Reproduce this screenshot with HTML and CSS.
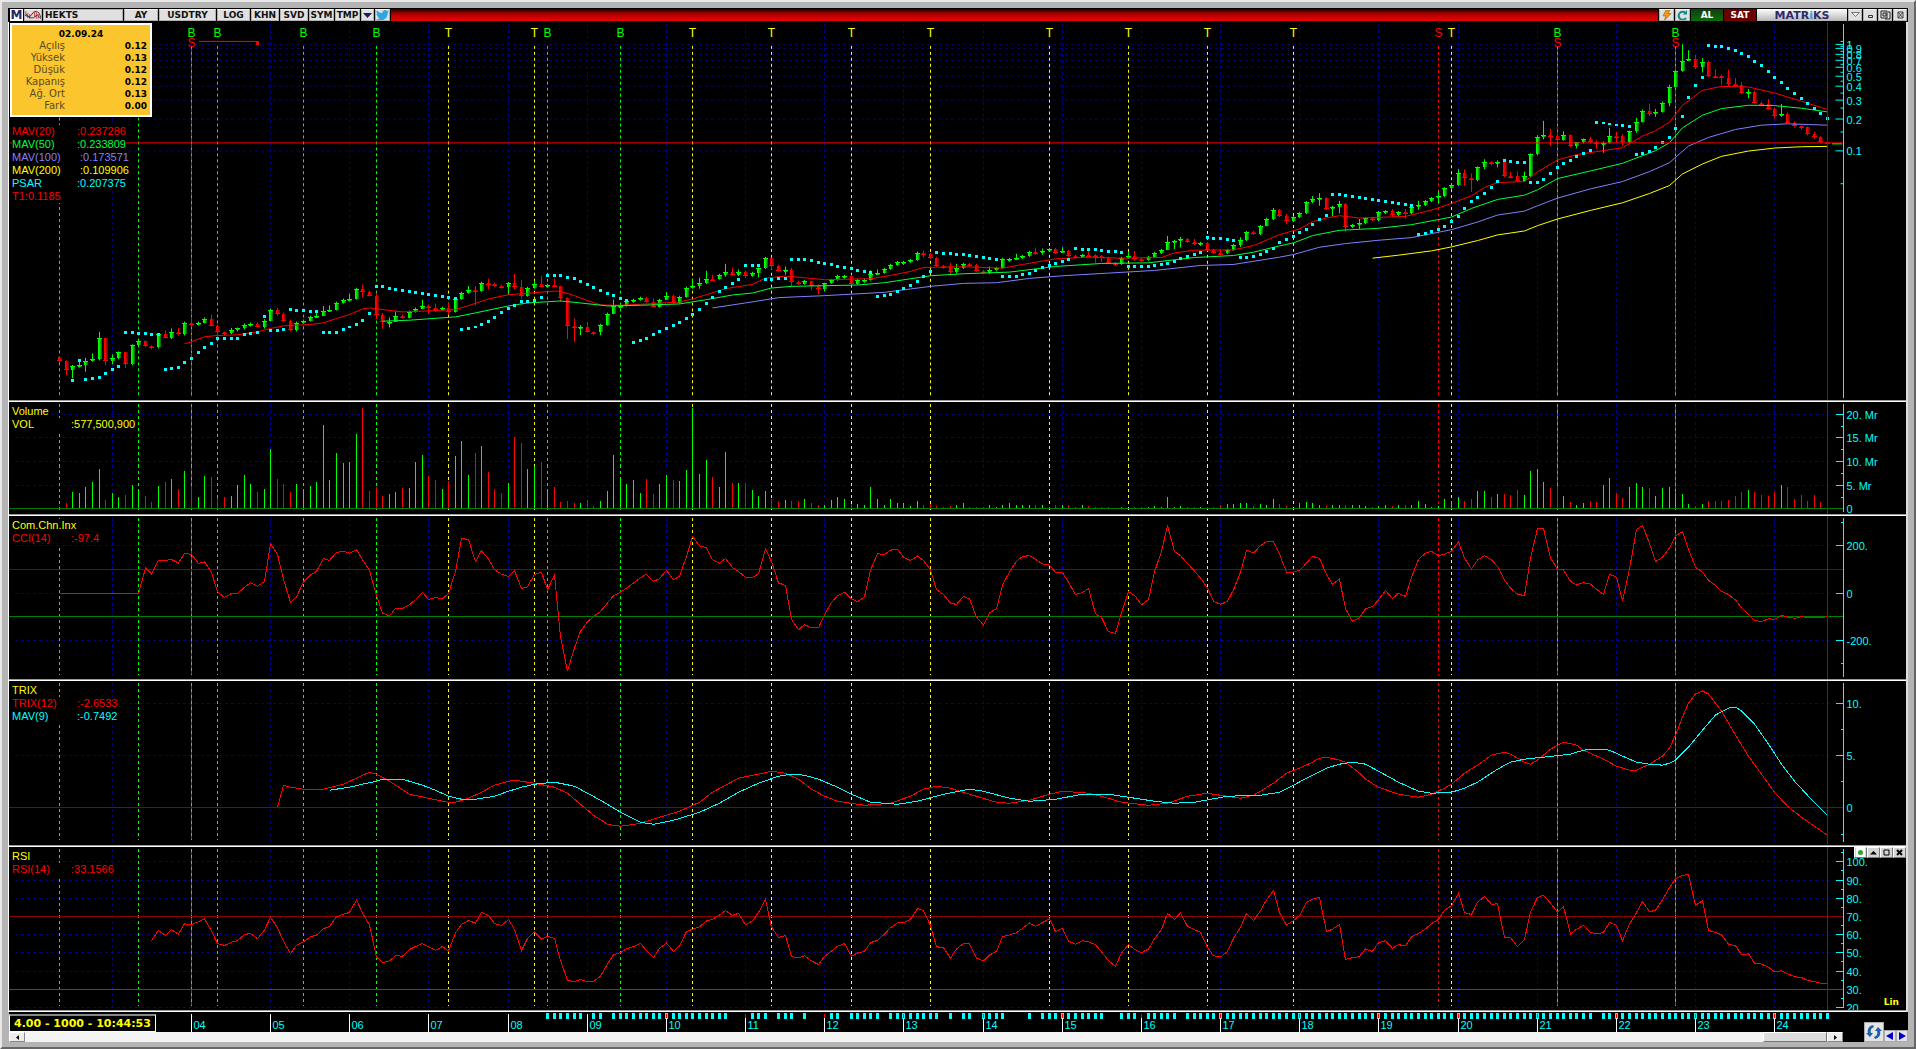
FILE: index.html
```html
<!DOCTYPE html>
<html lang="tr">
<head>
    <meta charset="UTF-8">
    <meta name="viewport" content="width=device-width, initial-scale=1.0">
    <title>HEKTS</title>
    <link rel="stylesheet" href="styles.css">
</head>
<body>

    <div class="window">

        <!-- Toolbar -->
        <header class="toolbar">
            <button class="tool logo-m" aria-label="Matriks">M</button>
            <button class="tool chart-type" aria-label="Chart type">
                <svg width="17" height="10" viewBox="0 0 17 10"><path d="M1 1v5M3 3v5M5 4v5M12 2v7M14 4v5M10 2v5" stroke="#d33" stroke-width="1"/><path d="M0 5l3 2 3-1 3-4 3-1 3 2 2 5M1 4l4 4 4 0 4-3 4 4" fill="none" stroke="#334" stroke-width="1"/></svg>
            </button>
            <input class="symbol" type="text" value="HEKTS" aria-label="Symbol">
            <button class="tool period">AY</button>
            <button class="tool currency">USDTRY</button>
            <button class="tool log">LOG</button>
            <button class="tool wide">KHN</button>
            <button class="tool wide">SVD</button>
            <button class="tool mid">SYM</button>
            <button class="tool mid">TMP</button>
            <button class="tool small" aria-label="Menu">
                <svg width="9" height="5" viewBox="0 0 9 5"><path d="M0 0h9L4.500 5z" fill="#1a1a5e"/></svg>
            </button>
            <button class="tool icon" aria-label="Twitter">
                <svg width="13" height="11" viewBox="0 0 24 20"><path d="M24 2.400a10 10 0 0 1-2.800.8A5 5 0 0 0 23.300.4a10 10 0 0 1-3.100 1.200A4.900 4.900 0 0 0 11.800 6 14 14 0 0 1 1.700.9a4.900 4.900 0 0 0 1.500 6.600A5 5 0 0 1 1 6.900a4.900 4.900 0 0 0 3.900 4.900 5 5 0 0 1-2.200.1 4.900 4.900 0 0 0 4.600 3.400A9.900 9.900 0 0 1 0 17.300 14 14 0 0 0 21.500 4.900 10 10 0 0 0 24 2.400z" fill="#2ba6de"/></svg>
            </button>
            <div class="title-bar"></div>
            <button class="tool icon" aria-label="Quick order">
                <svg width="10" height="11" viewBox="0 0 10 11"><path d="M4 0h4L6 3.500h3L2 11l2-5H1z" fill="#f39a1c" stroke="#a35a00" stroke-width=".6"/></svg>
            </button>
            <button class="tool icon" aria-label="Refresh">
                <svg width="11" height="11" viewBox="0 0 11 11"><path d="M9 8A4 4 0 1 1 8 2.500" fill="none" stroke="#0a8f86" stroke-width="2"/><path d="M6 4.500h4V0z" fill="#0a8f86"/></svg>
            </button>
            <button class="trade buy">AL</button>
            <button class="trade sell">SAT</button>
            <div class="brand">MATR<span>i</span>KS</div>
            <button class="tool win" aria-label="Drop">
                <svg width="9" height="6" viewBox="0 0 9 6"><path d="M.5.5h8l-4 4z" fill="#eee" stroke="#777"/></svg>
            </button>
            <button class="tool win" aria-label="Minimize">
                <svg width="7" height="7" viewBox="0 0 7 7"><path d="M1.500 3.500h4v2h-4z" fill="none" stroke="#333"/></svg>
            </button>
            <button class="tool win" aria-label="Restore">
                <svg width="11" height="10" viewBox="0 0 11 10"><path d="M1 1h6v7H1zM3 3h3v3H3zM8 2h2v7H5" fill="none" stroke="#222"/></svg>
            </button>
            <button class="tool win" aria-label="Close">
                <svg width="7" height="8" viewBox="0 0 7 8"><path d="M1 1h5v6H1zM1 1l5 6M6 1L1 7" fill="none" stroke="#444"/></svg>
            </button>
        </header>

        <!-- Chart panels -->
        <main class="panels">
            <section class="panel price">
                <svg class="plot" id="price"></svg>
                <table class="quote">
                    <caption>02.09.24</caption>
                    <tr><th>Açılış</th><td>0.12</td></tr>
                    <tr><th>Yüksek</th><td>0.13</td></tr>
                    <tr><th>Düşük</th><td>0.12</td></tr>
                    <tr><th>Kapanış</th><td>0.12</td></tr>
                    <tr><th>Ağ. Ort</th><td>0.13</td></tr>
                    <tr><th>Fark</th><td>0.00</td></tr>
                </table>
                <ul class="legend below-quote">
                    <li class="red"><span>MAV(20)</span>:0.237286</li>
                    <li class="green"><span>MAV(50)</span>:0.233809</li>
                    <li class="violet"><span class="far">MAV(100)</span>:0.173571</li>
                    <li class="yellow"><span class="far">MAV(200)</span>:0.109906</li>
                    <li class="cyan"><span>PSAR</span>:0.207375</li>
                    <li class="red">T1:0.1185</li>
                </ul>
            </section>

            <section class="panel volume">
                <svg class="plot" id="volume"></svg>
                <ul class="legend">
                    <li class="yellow">Volume</li>
                    <li class="yellow"><span class="near">VOL</span>:577,500,900</li>
                </ul>
            </section>

            <section class="panel">
                <svg class="plot" id="cci"></svg>
                <ul class="legend">
                    <li class="yellow">Com.Chn.Inx</li>
                    <li class="red"><span class="near">CCI(14)</span>:-97.4</li>
                </ul>
            </section>

            <section class="panel">
                <svg class="plot" id="trix"></svg>
                <ul class="legend">
                    <li class="yellow">TRIX</li>
                    <li class="red"><span>TRIX(12)</span>:-2.6533</li>
                    <li class="cyan"><span>MAV(9)</span>:-0.7492</li>
                </ul>
            </section>

            <section class="panel">
                <svg class="plot" id="rsi"></svg>
                <ul class="legend">
                    <li class="yellow">RSI</li>
                    <li class="red"><span class="near">RSI(14)</span>:33.1566</li>
                </ul>
                <div class="panel-buttons">
                    <button aria-label="Settings"><svg width="9" height="9" viewBox="0 0 9 9"><rect width="9" height="9" fill="#fff"/><circle cx="4.500" cy="4.500" r="2.500" fill="#2fa52f"/></svg></button>
                    <button aria-label="Move up"><svg width="9" height="9" viewBox="0 0 9 9"><path d="M1 6.500h7L4.500 3z"/></svg></button>
                    <button aria-label="Maximize"><svg width="9" height="9" viewBox="0 0 9 9"><path d="M2 2h5v5H2z" fill="none" stroke="#000"/></svg></button>
                    <button aria-label="Close panel"><svg width="9" height="9" viewBox="0 0 9 9"><path d="M2 2l5 5M7 2L2 7" stroke="#000" stroke-width="2"/></svg></button>
                </div>
                <span class="scale-mode">Lin</span>
            </section>
        </main>

        <!-- Time axis and scrolling -->
        <footer class="bottom">
            <div class="time">
                <svg class="time-axis" id="time"></svg>
                <div class="clock">4.00 - 1000 - 10:44:53</div>
                <div class="scroll">
                    <button aria-label="Scroll left"><svg width="3" height="5" viewBox="0 0 3 5"><path d="M3 0v5L0 2.500z"/></svg></button>
                    <input type="range" min="0" max="100" value="100" aria-label="Scroll chart">
                    <button aria-label="Scroll right"><svg width="3" height="5" viewBox="0 0 3 5"><path d="M0 0v5L3 2.500z"/></svg></button>
                </div>
            </div>
            <div class="corner">
                <button class="reload" aria-label="Reload">
                    <svg width="16" height="16" viewBox="0 0 16 16"><path d="M7 1C3 2 1 5 2 9l-2 0 4 4 3-4H5C4 6 5 4 8 3zM9 15c4-1 6-4 5-8h2l-4-4-3 4h2c1 3 0 5-3 6z" fill="#1d5fae"/></svg>
                </button>
                <button class="step" aria-label="Previous"><svg width="8" height="8" viewBox="0 0 8 8"><path d="M7 0v8L0 4z" fill="#00c"/></svg></button>
                <button class="step" aria-label="Next"><svg width="8" height="8" viewBox="0 0 8 8"><path d="M1 0v8l7-4z" fill="#00c"/></svg></button>
            </div>
        </footer>
    </div>

    <script src="chart.js"></script>
</body>
</html>
```
FILE: styles.css
```css
/* General reset */
* {
    margin: 0;
    padding: 0;
    box-sizing: border-box;
}

body {
    background-color: #b4b4b4;
    font-family: "Liberation Sans", Arial, sans-serif;
    font-size: 11px;
}

button {
    border: none;
    cursor: pointer;
}

/* Window frame */
.window {
    height: 100vh;
    display: flex;
    flex-direction: column;
    padding: 6px 6px 5px;
    border-style: solid;
    border-width: 2px;
    border-color: #e8e8e8 #666 #666 #e8e8e8;
}

/* Toolbar */
.toolbar {
    display: flex;
    gap: 1px;
    height: 14px;
    padding: 1px 1px 1px 2px;
    background-color: #000;
    font-family: "DejaVu Sans", Verdana, sans-serif;
    font-size: 9px;
    font-weight: bold;
}

.tool {
    display: flex;
    align-items: center;
    justify-content: center;
    height: 12px;
    background-color: #e0e0e0;
    border: 1px solid #b0b0b0;
    border-top-color: #f4f4f4;
    color: #111;
    font: inherit;
    overflow: hidden;
}

.logo-m {
    width: 13px;
    background-color: #fff;
    border-color: #fff;
    color: #26265f;
    font-size: 12px;
}

.chart-type {
    width: 18px;
}

.symbol {
    width: 80px;
    height: 12px;
    padding: 0 1px;
    border: 1px solid #b0b0b0;
    background-color: #e0e0e0;
    color: #111;
    font: inherit;
}

.period {
    width: 34px;
}

.currency {
    width: 57px;
}

.log {
    width: 33px;
}

.wide {
    width: 28px;
}

.mid {
    width: 25px;
}

.small {
    width: 13px;
}

.icon {
    width: 15px;
}

.title-bar {
    flex: 1;
    background: linear-gradient(#200, #a00 40%, #e00);
}

.trade {
    width: 32px;
    color: #fff;
    font: inherit;
}

.buy {
    background: linear-gradient(#123f0c, #0c6b0c);
}

.sell {
    background-color: #6a0000;
}

.brand {
    width: 90px;
    background: linear-gradient(#fff, #b5b5b5);
    color: #2b2b6b;
    font-size: 11px;
    line-height: 13px;
    text-align: center;
}

.brand span {
    color: #2ba6de;
}

.win {
    width: 14px;
}

/* Panels */
.panels {
    flex: 1;
    display: flex;
    flex-direction: column;
    min-height: 0;
    border-left: 1px solid #fff;
    border-right: 2px solid #ddd;
    background-color: #000;
}

.panel {
    position: relative;
    flex: 165 1 0;
    min-height: 0;
    padding-bottom: 1px;
    border-bottom: 1px solid #fff;
    background: linear-gradient(#999, #999) bottom / 100% 1px no-repeat;
}

.price {
    flex-grow: 382;
}

.volume {
    flex-grow: 113;
}

.plot {
    display: block;
    width: 100%;
    height: 100%;
    background-color: #000;
}

/* Daily quote box */
.quote {
    position: absolute;
    top: 1px;
    left: 1px;
    width: 142px;
    padding: 0 3px 3px;
    border: 2px solid #fff;
    border-top: none;
    background-color: #fbc62d;
    border-spacing: 0;
    font-family: "DejaVu Sans", Verdana, sans-serif;
    font-size: 9px;
}

.quote caption {
    padding-top: 3px;
    border: 2px solid #fff;
    border-bottom: none;
    background-color: #fbc62d;
    font-weight: bold;
    line-height: 12px;
}

.quote th {
    width: 50px;
    color: #5c4a1c;
    font-size: 10px;
    font-weight: normal;
    line-height: 12px;
    text-align: right;
}

.quote td {
    font-weight: bold;
    line-height: 12px;
    text-align: right;
}

/* Indicator legends */
.legend {
    position: absolute;
    top: 3px;
    left: 3px;
    list-style: none;
    line-height: 13px;
}

.below-quote {
    top: 103px;
}

.legend li {
    width: max-content;
    background-color: #000;
}

.legend span {
    display: inline-block;
    width: 65px;
}

.legend .far {
    width: 68px;
}

.legend .near {
    width: 59px;
}

.red {
    color: #f00;
}

.green {
    color: #00ff40;
}

.violet {
    color: #8080ff;
}

.yellow {
    color: #ff0;
}

.cyan {
    color: #0ff;
}

/* Small buttons of the active panel */
.panel-buttons {
    position: absolute;
    top: 0;
    right: 0;
    display: flex;
}

.panel-buttons button {
    display: flex;
    align-items: center;
    justify-content: center;
    width: 13px;
    height: 11px;
    background-color: #d4d4d4;
    border: 1px solid #777;
    border-top-color: #fff;
    border-left-color: #fff;
}

.scale-mode {
    position: absolute;
    right: 7px;
    bottom: 4px;
    color: #ff0;
    font-family: "DejaVu Sans", Verdana, sans-serif;
    font-size: 9px;
    font-weight: bold;
}

/* Bottom bar */
.bottom {
    display: flex;
    height: 30px;
    margin-left: 1px;
    background-color: #000;
}

.time {
    position: relative;
    flex: 1;
    min-width: 0;
}

.time-axis {
    display: block;
    width: 100%;
    height: 20px;
}

.clock {
    position: absolute;
    top: 2px;
    left: 0;
    padding: 0 4px;
    border: 1px solid #fff;
    border-top: 2px solid #888;
    background-color: #000;
    color: #ff0;
    font-family: "DejaVu Sans", Verdana, sans-serif;
    font-size: 11px;
    font-weight: bold;
    line-height: 15px;
}

.scroll {
    display: flex;
    height: 10px;
    background-color: #f4f4f4;
}

.scroll button {
    display: flex;
    align-items: center;
    justify-content: center;
    width: 16px;
    background-color: #ececec;
    border: 1px solid #888;
    border-top-color: #fff;
    border-left-color: #fff;
}

.scroll input {
    flex: 1;
    min-width: 0;
    height: 10px;
    appearance: none;
    background: none;
}

.scroll input::-webkit-slider-thumb {
    appearance: none;
    width: 64px;
    height: 10px;
    background-color: #dcdcdc;
    border: 1px solid #777;
    border-top-color: #fff;
    border-left-color: #fff;
}

.corner {
    display: flex;
    align-items: flex-end;
    justify-content: flex-end;
    width: 65px;
}

.corner button {
    display: flex;
    align-items: center;
    justify-content: center;
    background-color: #e4e4e4;
    border: 1px solid #aaa;
}

.corner .reload {
    width: 20px;
    height: 20px;
}

.corner .step {
    width: 12px;
    height: 12px;
}

/* Text inside the plots */
svg text {
    font-family: "Liberation Sans", Arial, sans-serif;
    font-size: 11px;
}

svg .signal {
    font-size: 12px;
    text-anchor: middle;
}
```
FILE: chart.js
```js
// Plot area: distance of the first bar from the left, of the last bar and the axis from the right
const LEFT = 50;
const RIGHT = 79;
const AXIS = 63;
const BARS = 268;

// Closing levels (three steps per pixel, downwards) and wicks [bar, high, low]
const closes = [
    { from: 0, base: 540, v: [488,516,503,500,490,484,421,489,480,462,499,441,430,445,446,408,419,402,409,373,376,372,361,380,402,404,397,390,378,376,384,367,333,346,367,397,373,367,354,350,336,334,312,302,299,269,280,292,349,370,368,350,356,338,330,322,328,332,327,338,300,282,274,277,251,256,262,265,252,263,292,267,255,264,259,262,297,380,390,386,401,402,378,346,322,320,307,303],
      wicks: [[1,486,530],[2,500,540],[3,490,508],[4,478,520],[5,465,490],[6,400,486],[7,418,500],[8,468,498],[10,465,509],[16,396,420],[17,390,422],[18,388,412],[20,355,380],[23,348,384],[24,378,415],[26,388,407],[31,362,390],[33,328,352],[39,340,358],[40,322,350],[41,320,340],[44,285,308],[46,258,296],[48,282,362],[49,343,390],[50,357,387],[51,338,368],[55,303,332],[56,318,347],[57,315,340],[59,313,348],[62,262,285],[63,262,320],[65,240,272],[68,250,288],[69,225,272],[70,243,300],[72,246,270],[73,232,266],[75,240,266],[76,262,310],[77,297,422],[78,360,430],[79,380,410],[80,370,402],[82,376,410],[84,303,347]] },
    { from: 88, base: 480, v: [358,368,384,362,350,372,353,328,322,312,301,301,289,279,287,279,290,283,268,238,262,276,273,310,316,307,320,331,312,303,292,290,314,304,302,285,282,270,257,250,249,243,222,224,238,262,262,280,266,256,257,277,282,273,266,241,240,236,231,220,222,216,210,221,215,230,232,229,229,232,238,252,254,236,231,241,242,235,222,212,188,187,179,190,195,193,213,223,223,212,198,182,159,164,140,120,94],
      wicks: [[90,360,386],[92,340,362],[96,300,330],[97,297,330],[98,276,316],[99,288,302],[101,255,294],[102,267,290],[103,272,292],[104,276,297],[106,266,296],[108,238,272],[110,263,288],[111,267,326],[114,306,335],[115,318,347],[116,312,338],[123,275,306],[124,272,285],[130,218,246],[131,215,236],[135,252,286],[136,255,284],[141,263,286],[145,225,242],[148,207,228],[149,209,228],[152,205,218],[156,215,232],[157,226,252],[158,228,250],[162,220,240],[163,216,246],[168,171,210],[169,183,210],[170,174,206],[172,180,198],[176,210,230],[179,175,204],[183,116,142],[184,87,123]] },
    { from: 185, base: 0, v: [592,605,595,582,548,540,537,570,564,555,625,618,613,597,604,578,576,588,580,583,563,557,545,536,530,508,497,461,478,482,444,429,433,430,471,471,486,471,405,354,347,352,362,349,382,370,360,370,373,371,350,352,370,335,306,274,283,277,248,201,153,123,118,142,126,167,168,173,192,196,220,216,249,252,268,288,283,308,322,324,346,354,370,373],
      wicks: [[186,585,615],[190,531,552],[191,522,560],[193,560,592],[194,545,583],[195,552,640],[197,600,630],[202,570,592],[204,570,598],[206,545,572],[209,515,553],[211,493,510],[212,450,500],[213,450,500],[214,462,518],[216,420,450],[218,423,444],[220,457,474],[221,457,488],[222,457,487],[224,347,408],[225,304,360],[226,328,380],[228,335,364],[230,368,387],[232,352,372],[233,363,388],[234,366,400],[235,325,373],[236,337,370],[237,345,380],[239,295,340],[241,252,290],[242,268,292],[244,195,260],[246,73,156],[247,91,124],[248,105,148],[249,115,158],[251,148,172],[252,165,195],[253,150,200],[254,175,198],[255,187,224],[256,208,236],[259,238,270],[260,264,297],[261,253,292],[266,337,358]] }
];

const volumes = [0,5,16,15,21,26,39,8,15,11,13,23,19,12,6,22,26,29,19,37,20,11,32,31,10,11,12,23,33,24,16,19,58,29,24,16,24,19,22,26,82,28,54,44,45,73,99,17,21,12,14,16,20,20,45,52,32,28,19,27,51,66,33,54,61,36,19,15,25,70,64,39,41,45,19,21,6,7,5,5,8,2,7,17,52,31,24,28,15,29,14,24,33,28,27,38,99,34,47,31,21,55,25,25,25,18,12,17,9,7,8,7,7,9,5,3,3,8,11,9,4,4,3,21,9,3,9,5,5,2,7,3,4,2,1,2,3,5,1,1,1,3,1,3,5,3,3,3,3,3,1,3,3,3,1,3,2,1,1,1,0,1,0,1,1,1,2,1,11,1,2,1,1,1,1,1,3,4,4,5,5,2,4,3,9,4,2,0,5,6,5,3,2,3,3,3,3,3,2,1,2,3,2,3,3,3,7,4,1,2,9,7,11,7,9,17,17,11,14,14,13,18,13,37,39,26,20,20,12,6,3,5,7,6,23,30,15,10,21,25,21,20,12,20,21,15,14,4,2,4,7,7,7,8,12,16,18,16,13,12,16,23,21,9,13,7,13,6,0];

// Moving averages as [bar, level] knots
const averages = {
    "#f00": [19,976,20,970,22,955,24,951,27,949,30,940,32,930,34,922,38,918,40,913,42,900,44,888,46,871,47,868,49,873,52,880,56,877,60,873,62,861,65,841,68,828,71,824,75,817,76,818,78,831,80,846,82,859,85,860,88,857,94,850,96,841,98,828,101,810,105,797,107,778,110,772,113,777,116,783,123,780,126,770,129,758,131,746,137,744,143,748,146,737,151,720,156,715,161,718,167,716,169,702,172,694,178,693,181,680,185,647,188,630,190,608,192,597,194,590,197,597,204,592,208,573,211,553,214,530,216,505,218,490,222,487,224,458,227,422,230,406,237,385,240,350,242,334,244,308,246,257,249,212,252,200,256,202,260,220,264,245,268,270],
    "#00ff40": [49,908,53,905,60,895,63,883,68,862,71,853,76,847,79,853,83,862,88,860,94,856,98,843,102,829,105,823,108,808,111,803,121,799,125,792,132,771,137,765,144,760,151,743,158,734,165,732,172,716,178,710,181,700,185,681,187,672,190,650,194,634,200,628,205,617,211,594,214,568,218,541,222,528,224,512,227,478,232,455,237,432,242,394,244,370,246,325,249,287,252,267,256,257,260,258,264,266,268,277],
    "#8080ff": [99,868,104,853,109,837,116,831,125,821,132,803,137,794,142,792,147,779,152,771,159,763,166,755,173,740,178,737,185,715,187,707,191,685,195,674,200,664,205,656,211,632,215,609,218,588,222,576,224,560,227,537,232,509,237,487,241,457,244,430,247,380,250,354,254,330,258,317,262,313,268,317],
    "#ff0": [199,718,203,709,208,696,211,684,215,665,218,648,222,636,224,620,227,600,232,574,237,551,241,523,244,499,246,464,249,434,252,411,256,395,260,386,264,382,268,381]
};

const psar = [
    [3,1027], [2,1085,2,1085], [4,1084,5,1081,6,1078,8,1053,9,1045], [10,942,15,949],
    [16,1054,18,1046,20,1020,21,1001,23,975,24,961,27,959,28,949,30,942], [31,892], [32,936,34,933],
    [35,871,39,877], [40,943,42,941,44,925,46,902,47,883], [48,802,49,802,55,823,60,837],
    [61,934,63,924,65,905,68,868,70,847,72,844,73,834], [74,769,76,769,78,778,80,796,84,829,86,842],
    [87,973,89,959,92,929,96,886,98,853,100,817,103,781], [104,739,106,739], [107,781,110,776],
    [111,720,113,721,116,731,119,744,123,759], [124,832,126,826,128,808,130,787,132,757],
    [133,700,137,706,140,714,142,721], [143,772,145,771,147,761,149,745,151,731,153,720],
    [154,688,158,692,161,700], [162,742,165,740,168,731,170,718,173,700], [174,655,176,658,178,664],
    [179,714,181,712,183,697,184,688,185,670,189,629,192,587], [193,526,194,526,200,544,205,559],
    [206,646,209,631,210,622,211,607,212,592,213,567,214,547,216,522,218,485], [219,424,222,430],
    [223,490,224,490,225,481,227,445,230,410,232,393], [233,306,238,320],
    [239,406,240,403,241,395,243,370,244,355,245,328,246,289,247,232,248,196,249,172],
    [250,76,252,79,254,91,256,108,258,136,261,187,263,220,265,250,267,280,268,295]
];

const cci = [
    { from: 0, div: 3, v: [583,583,583,583,583,583,583,583,583,583,583,583,583,507,525,484,484,481,492,463,466,493,488,520,578,595,583,583,564,551,561,547,434,466,540,610,593,549,527,517,478,484,460,457,462,452,482,514,590,642,650,628,628,617,601,580,601,595,599,583,517,418,422,487,455,480,512,525,532,515,568,563,526,519,572,527,713,815,746,696,668,652,637,611,590] },
    { from: 85, div: 2.529, v: [488,478,465,452,443,461,454,433,457,448,398,348,371,376,406,415,403,426,436,451,451,442,379,411,465,471,557,583,570,578,578,545,514,497,488,505,512,500,432,391,393,382,380,400,408,397,408,432,482,494,516,519,499,505,551,571,540,530,470,437,410,398,396,405,417,420,438,439,463,494,489,479,543,552,588,592,540,487,496,520,507,437,385,320,386,396,416,435,453,477,511,519,511,482,438,382,389,371,361,361,392,438,438,433,415,398,403,443,468,455,530,562,553,530,524,508,484,504,491,499,451,405,390,385,396,392,385,361,402,430,407,396,407,423,458,478,493,497,402,327,327,402,430,432,461,470,464,468,481,494,443,450,510,430,330,320,365,411,400,376,346,335,380,425,438,458,471,486,494,508,527,544,559,563,555,557,547,551,554,550,552,552,552,550] }
];

const trix = [33,126,34,104,35,106,37,108,40,108,43,103,45,97,47,91,48,93,50,100,53,113,56,117,59,121,60,121,62,117,64,111,66,104,68,100,69,99,72,102,75,106,77,112,79,123,81,134,83,143,85,145,88,142,91,136,94,130,97,121,99,111,101,104,103,97,106,93,108,90,110,92,112,98,114,108,116,115,118,120,122,124,126,122,129,115,131,108,133,105,135,107,138,113,142,121,144,122,147,119,150,113,152,110,156,112,158,115,161,121,165,124,168,122,171,115,174,112,175,113,179,117,181,114,182,110,184,102,186,92,188,87,190,81,191,77,192,76,194,79,195,81,197,92,198,98,200,106,203,113,206,116,208,113,210,107,211,103,213,92,215,84,217,74,219,71,220,73,222,81,223,83,224,79,226,68,228,61,230,64,231,69,234,78,236,85,238,89,239,89,241,83,243,75,244,67,245,54,246,36,247,22,248,13,249,10,250,13,252,30,254,54,256,75,258,93,260,111,262,125,264,136,266,145,268,154];
const trixAverage = [41,109,44,106,46,103,48,100,49,98,52,98,55,104,57,109,59,115,61,118,63,118,66,115,68,110,70,106,72,103,75,101,78,105,80,112,82,119,85,131,88,141,90,143,93,139,97,131,100,122,103,111,106,102,109,95,111,93,113,94,115,98,118,106,120,113,123,121,127,123,130,120,134,113,138,108,140,110,144,117,147,120,151,118,155,113,159,113,162,116,166,120,169,122,172,121,177,115,182,114,185,111,187,104,189,97,192,87,194,83,196,81,198,83,200,90,203,101,206,110,208,112,211,111,213,107,215,101,218,88,220,81,222,78,225,76,229,73,231,69,233,68,235,69,237,75,239,81,241,83,243,84,244,82,245,79,247,66,249,49,251,34,253,27,254,26,255,30,257,43,259,63,261,83,263,100,265,114,267,127,268,134];

const rsi = [
    { from: 14, div: 3, v: [781,751,766,749,762,731,733,725,716,753,790,796,786,781,763,760,776,749,711,743,783,820,795,785,770,765,746,739,710,702,697,660,698,735,830,847,842,826,828,808,799,790,800,810,799,812,758,733,721,729,697,706,730,736,718,748,811,775,755,777,768,775,842,900,904,898,904,904,888,851,824] },
    { from: 85, div: 2.529, shift: 280, v: [1397,1387,1382,1374,1392,1410,1386,1373,1394,1380,1344,1338,1332,1317,1313,1302,1291,1303,1298,1327,1317,1296,1263,1332,1359,1354,1407,1410,1405,1418,1427,1407,1393,1381,1374,1406,1398,1394,1372,1366,1350,1334,1322,1322,1313,1286,1291,1329,1382,1385,1411,1388,1374,1375,1411,1418,1403,1394,1357,1352,1347,1336,1322,1331,1321,1312,1344,1336,1368,1376,1367,1370,1377,1395,1417,1432,1398,1377,1389,1397,1388,1362,1339,1298,1313,1297,1331,1339,1346,1384,1405,1408,1394,1361,1333,1298,1316,1291,1264,1240,1296,1328,1316,1304,1270,1262,1258,1344,1338,1326,1414,1410,1407,1388,1394,1372,1367,1386,1377,1380,1357,1349,1337,1324,1313,1290,1279,1247,1296,1301,1270,1255,1275,1274,1359,1359,1382,1364,1294,1258,1252,1272,1295,1281,1350,1338,1328,1346,1350,1346,1321,1328,1367,1325,1296,1268,1294,1290,1264,1233,1211,1202,1200,1278,1266,1341,1346,1352,1376,1380,1402,1400,1424,1426,1434,1445,1443,1450,1458,1460,1467,1470,1474,1476] }
];

// Signal lines: bar and letters
const signals = [[0,"B"],[12,"B"],[20,"BS"],[24,"B"],[37,"B"],[48,"B"],[59,"T"],[72,"T"],[74,"B"],[85,"B"],[96,"T"],[108,"T"],[120,"T"],[132,"T"],[150,"T"],[162,"T"],[174,"T"],[187,"T"],[209,"S"],[211,"T"],[227,"BS"],[245,"BS"]];
const signalColors = { B: "#0f0", S: "#f00", T: "#ff0" };

// Bars that have an event mark on the time axis
const events = [[74,79],[81,82],[84,101],[105,107],[109,111],[113,113],[117,118],[120,124],[126,133],[135,135],[137,138],[140,143],[147,147],[149,158],[161,163],[165,169],[171,232],[234,268]];

function line(x1, y1, x2, y2, color, dash, offset) {
    return `<line x1="${x1}" y1="${y1}" x2="${x2}" y2="${y2}" stroke="${color}"${dash ? ` stroke-dasharray="${dash}"` : ""}${offset ? ` stroke-dashoffset="${offset}"` : ""}/>`;
}

function rect(x, y, w, h, color) {
    return `<rect x="${x}" y="${y}" width="${w}" height="${h}" fill="${color}"/>`;
}

function path(points, color) {
    return `<polyline points="${points.map(p => p.join(",")).join(" ")}" fill="none" stroke="${color}"/>`;
}

function barX(i, width) {
    return Math.round(LEFT + i * (width - RIGHT - LEFT) / BARS) + 0.5;
}

function knots(list, width, toY) {
    const points = [];
    for (let k = 0; k < list.length; k += 2) points.push([barX(list[k], width), toY(list[k + 1])]);
    return points;
}

// Grid, signal lines and value axis that all panels share
function frame(width, height, rows, minor, top) {
    let out = "";
    for (const [y] of rows) out += line(6, y + 0.5, width - AXIS - 9, y + 0.5, "#00008b", "3 3");
    for (let i = 8; i < BARS; i += 12) {
        out += line(barX(i, width), 2, barX(i, width), height - 3, "#00008b", "3 3");
    }
    for (const [i, letters] of signals) {
        const x = barX(i, width);
        [...letters].forEach((letter, k) => {
            out += line(x, top, x, height - 4, signalColors[letter], "3 3", k * 3);
        });
    }
    const axis = width - AXIS + 0.5;
    out += line(axis, 2, axis, height - 2, "#0ff");
    for (const [y, label] of rows) {
        out += line(axis - 8, y + 0.5, axis, y + 0.5, "#0ff");
        out += `<text x="${axis + 3}" y="${y + 5}" fill="#0ff">${label}</text>`;
    }
    for (const y of minor) out += line(axis - 3, y + 0.5, axis, y + 0.5, "#0ff");
    return out;
}

function cursor(width, height) {
    return line(barX(BARS, width), 0, barX(BARS, width), height, "#800080");
}

function level(width, y, color) {
    return line(0, y + 0.5, width - AXIS, y + 0.5, color);
}

function oscillator(parts, width, shift) {
    const points = [];
    for (const part of parts) {
        part.v.forEach((v, k) => points.push([barX(part.from + k, width), v / part.div - shift - (part.shift || 0)]));
    }
    return path(points, "#f00");
}

function allCloses() {
    return closes.flatMap(part => part.v.map(v => (v + part.base) / 3 - 2));
}

function drawPrice(width, height) {
    const toY = v => v / 3 - 2;
    const rows = [[22,"1"],[26,"0.9"],[32,"0.8"],[38,"0.7"],[45,"0.6"],[54,"0.5"],[64,"0.4"],[78,"0.3"],[97,"0.2"],[129,"0.1"]];
    let out = `<defs>
        <linearGradient id="up"><stop offset=".3" stop-color="#0f0"/><stop offset="1" stop-color="#050"/></linearGradient>
        <linearGradient id="down"><stop offset=".3" stop-color="#f00"/><stop offset="1" stop-color="#500"/></linearGradient>
    </defs>`;
    out += frame(width, height, rows, [19, 24, 29, 35, 42, 50, 59, 71, 86, 110, 162], 24);

    for (const [i, letters] of signals) {
        [...letters].forEach((letter, k) => {
            out += `<text class="signal" x="${barX(i, width)}" y="${15 + k * 10}" fill="${signalColors[letter]}">${letter}</text>`;
        });
    }

    const wicks = {};
    for (const part of closes) {
        for (const [i, high, low] of part.wicks) wicks[i] = [toY(high + part.base), toY(low + part.base)];
    }
    const values = allCloses();
    values.forEach((close, i) => {
        const open = i ? values[i - 1] : close - 4;
        const up = close < open;
        const color = up ? "#0f0" : "#f00";
        const x = barX(i, width);
        const top = Math.round(Math.min(open, close));
        const bottom = Math.max(top + 2, Math.round(Math.max(open, close)));
        const [high, low] = wicks[i] || [top - 1, bottom + 1];
        out += line(x, Math.min(high, top), x, Math.max(low, bottom), color);
        out += rect(x - 1.5, top, 4, bottom - top, up ? "url(#up)" : "url(#down)");
        out += rect(x - 2.5, up ? top : bottom - 1, 5, 1, color);
    });

    for (const color in averages) out += path(knots(averages[color], width, toY), color);

    for (const run of psar) {
        for (let k = 0; k < run.length; k += 2) {
            const [i0, v0, i1 = i0 + 1, v1 = v0] = run.slice(k, k + 4);
            for (let i = i0; i < i1; i++) {
                out += rect(barX(i, width) - 1.5, Math.round(toY(v0 + (v1 - v0) * (i - i0) / (i1 - i0))) - 1, 3, 3, "#0ff");
            }
        }
    }

    // Trend line T1 and the last price
    out += line(1, 121.5, width - AXIS, 121.5, "#f00");
    out += line(190, 19.5, 249, 19.5, "#f00") + rect(247, 19, 3, 4, "#f00");
    out += line(width - AXIS - 11, 122.5, width - AXIS - 1, 122.5, "#0f0");
    return out + cursor(width, height);
}

function drawVolume(width, height) {
    let out = frame(width, height, [[12,"20. Mr"],[35,"15. Mr"],[59,"10. Mr"],[82,"5. Mr"],[105,"0"]], [24, 47, 70, 94], 2);
    const values = allCloses();
    volumes.forEach((v, i) => {
        const up = i > 0 && values[i] < values[i - 1];
        out += rect(barX(i, width) - 0.5, 105 - v, 1, v, up ? "#0f0" : "#f00");
    });
    return out + level(width, 105, "#008000") + cursor(width, height);
}

function drawCci(width, height) {
    return frame(width, height, [[29,"200."],[77,"0"],[124,"-200."]], [6, 147], 2)
        + level(width, 53, "#8b0000") + level(width, 100, "#008000")
        + oscillator(cci, width, 117) + cursor(width, height);
}

function drawTrix(width, height) {
    return frame(width, height, [[22,"10."],[74,"5."],[126,"0"]], [48, 100, 153], 2)
        + level(width, 126, "#8b0000")
        + path(knots(trix, width, v => v), "#f00")
        + path(knots(trixAverage, width, v => v), "#0ff")
        + cursor(width, height);
}

function drawRsi(width, height) {
    const rows = [[14,"100."],[33,"90."],[51,"80."],[69,"70."],[87,"60."],[105,"50."],[124,"40."],[142,"30."],[160,"20."]];
    return frame(width, height, rows, [5, 23, 42, 60, 78, 96, 114, 133, 151], 2)
        + level(width, 69, "#8b0000") + level(width, 142, "#008000")
        + oscillator(rsi, width, 167) + cursor(width, height);
}

function drawTime(width) {
    const full = width + AXIS;
    let out = "";
    for (const [a, b] of events) {
        for (let i = a; i <= b; i++) out += rect(barX(i, full) - 1.5, 1, 3, 6, "#0ff");
    }
    for (let i = 8, year = 3; i < BARS; i += 12, year++) {
        const x = barX(i, full);
        out += line(x, 2, x, 20, "#fff");
        if (i > 90) out += line(x, 2, x, 6, "#f00");
        if (year > 3) out += `<text x="${x + 2}" y="17" fill="#0ff">${String(year).padStart(2, "0")}</text>`;
    }
    return out;
}

// id, drawing function, design height
const plots = [["price", drawPrice, 380], ["volume", drawVolume, 111], ["cci", drawCci, 163], ["trix", drawTrix, 163], ["rsi", drawRsi, 163], ["time", drawTime, 20]];

function drawAll() {
    for (const [id, draw, height] of plots) {
        const svg = document.getElementById(id);
        const width = Math.round(svg.getBoundingClientRect().width);
        svg.setAttribute("viewBox", `0 0 ${width} ${height}`);
        svg.setAttribute("preserveAspectRatio", "none");
        svg.setAttribute("shape-rendering", "crispEdges");
        svg.innerHTML = draw(width, height);
    }
}

drawAll();
window.addEventListener("resize", drawAll);
```
